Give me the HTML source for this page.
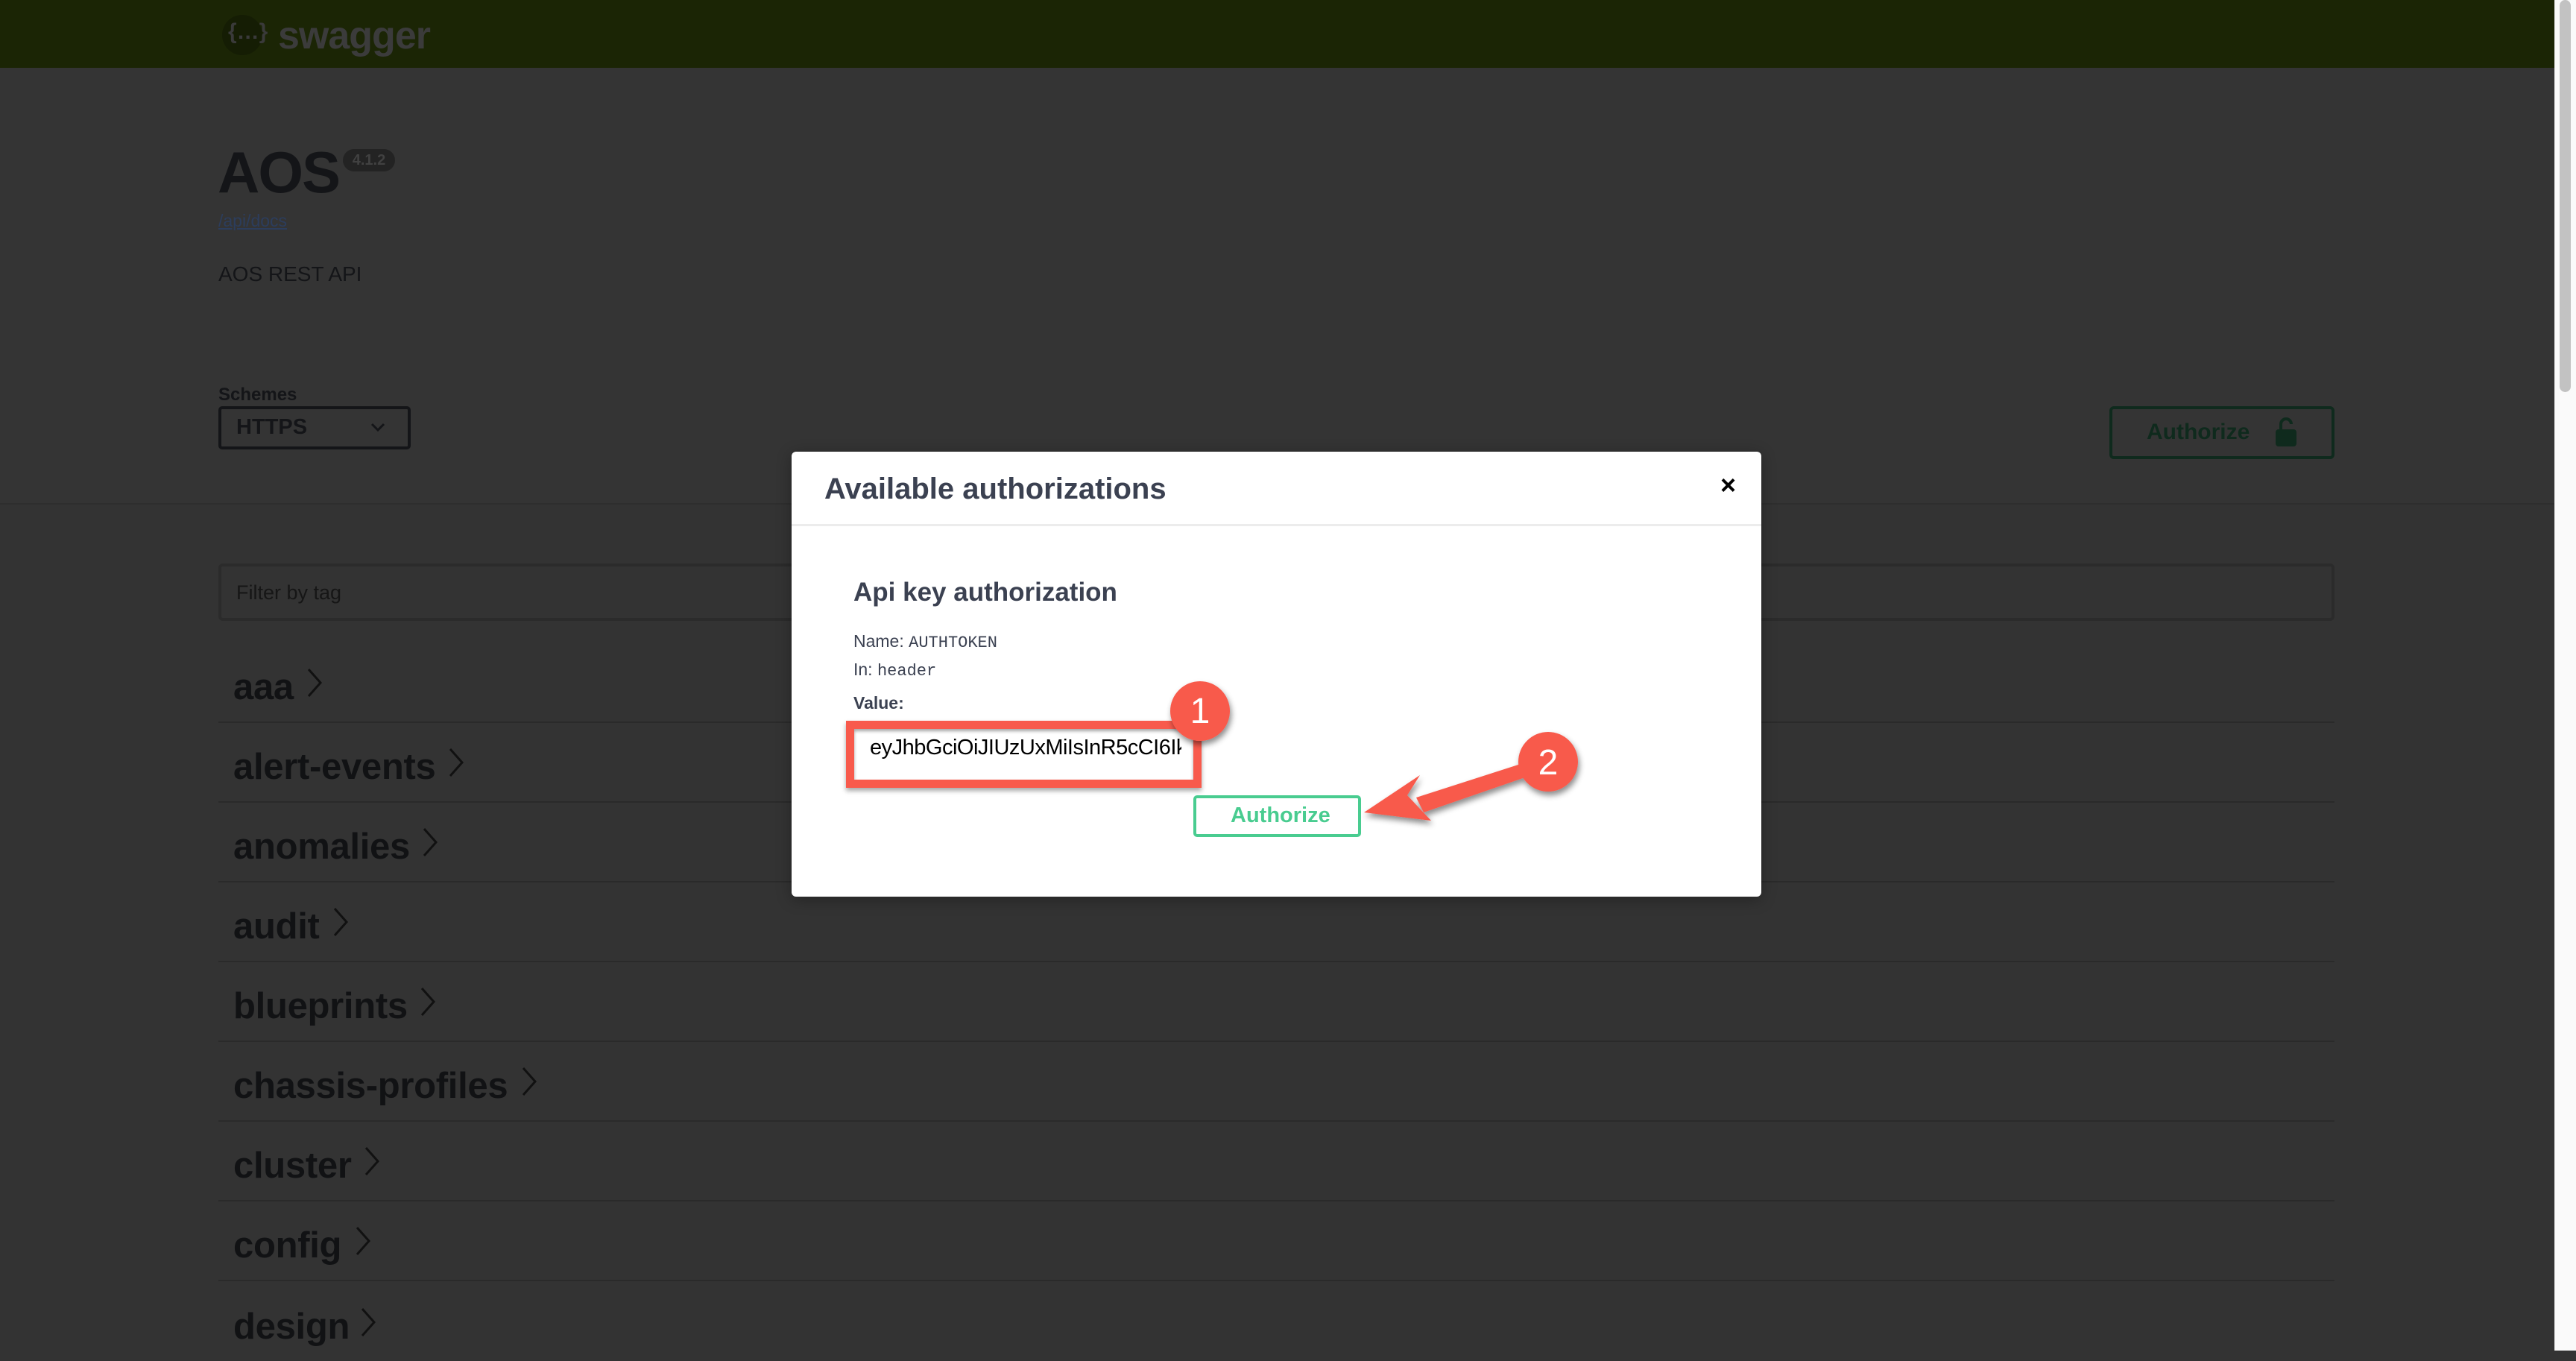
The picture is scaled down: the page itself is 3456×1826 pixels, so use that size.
<!DOCTYPE html>
<html><head><meta charset="utf-8">
<style>
*{margin:0;padding:0;box-sizing:border-box}
body{width:3456px;height:1812px;overflow:hidden;background:#333;font-family:"Liberation Sans",sans-serif;position:relative}
.abs{position:absolute}
.top{left:0;top:0;width:3427px;height:91px;background:#1b2505}
.hdr{left:0;top:91px;width:3427px;height:586px;background:#343434;border-bottom:2px solid #2e2e2e}
.sb{left:3427px;top:0;width:29px;height:1812px;background:#fafafa;border-left:1px solid #e6e6e6}
.thumb{left:3434px;top:0;width:15px;height:526px;background:#c2c2c2;border-radius:8px}
.tag{left:293px;width:2839px;height:107px;border-bottom:2px solid #2a2a2a}
.tag span{position:absolute;left:20px;bottom:18px;font-size:49px;font-weight:bold;color:#111214;letter-spacing:-0.3px}
.tag svg{position:absolute;bottom:32px}
.modal{left:1062px;top:606px;width:1301px;height:597px;background:#fff;border-radius:6px;box-shadow:0 4px 20px rgba(0,0,0,.3)}
</style></head><body>
<div class="abs top"></div>
<div class="abs" style="left:298px;top:20px;width:54px;height:54px;border-radius:50%;background:#151d04"></div>
<div class="abs" style="left:306px;top:26px;font-size:30px;font-weight:bold;color:#3a3a3a">{…}</div>
<div class="abs" style="left:373px;top:18px;font-size:52px;font-weight:bold;color:#3b3b3b;letter-spacing:-1px">swagger</div>
<div class="abs hdr"></div>
<div class="abs" style="left:292px;top:186px;font-size:78px;font-weight:bold;color:#141518;letter-spacing:-2px">AOS</div>
<div class="abs" style="left:460px;top:200px;width:70px;height:30px;border-radius:15px;background:#232323;color:#414141;font-size:20px;font-weight:bold;text-align:center;line-height:30px">4.1.2</div>
<div class="abs" style="left:293px;top:283px;font-size:23px;color:#2c3d5c;text-decoration:underline">/api/docs</div>
<div class="abs" style="left:293px;top:352px;font-size:28px;color:#141518">AOS REST API</div>
<div class="abs" style="left:293px;top:516px;font-size:24px;font-weight:bold;color:#141518">Schemes</div>
<div class="abs" style="left:293px;top:545px;width:258px;height:58px;border:4px solid #141518;border-radius:5px"></div>
<div class="abs" style="left:317px;top:557px;font-size:29px;font-weight:bold;color:#141518">HTTPS</div>
<svg class="abs" style="left:496px;top:566px" width="22" height="16"><path d="M3 3l8 8 8-8" stroke="#141518" stroke-width="3" fill="none"/></svg>
<div class="abs" style="left:2830px;top:545px;width:302px;height:71px;border:4px solid #0f2a1d;border-radius:6px"></div>
<div class="abs" style="left:2880px;top:563px;font-size:30px;font-weight:bold;color:#0f2a1d">Authorize</div>
<svg class="abs" style="left:3052px;top:560px" width="32" height="40"><path d="M8 16V9a7 7 0 0 1 14 0" stroke="#0f2a1d" stroke-width="4" fill="none"/><rect x="1" y="16" width="28" height="23" rx="4" fill="#0f2a1d"/></svg>
<div class="abs" style="left:293px;top:756px;width:2839px;height:77px;border:4px solid #2b2b2b;border-radius:6px"></div>
<div class="abs" style="left:317px;top:780px;font-size:27px;color:#161616">Filter by tag</div>
<div class="abs tag" style="top:863px"><span>aaa</span><svg style="left:118px" width="22" height="40"><path d="M3 2l16 18-16 18" stroke="#111" stroke-width="3" fill="none"/></svg></div>
<div class="abs tag" style="top:970px"><span>alert-events</span><svg style="left:308px" width="22" height="40"><path d="M3 2l16 18-16 18" stroke="#111" stroke-width="3" fill="none"/></svg></div>
<div class="abs tag" style="top:1077px"><span>anomalies</span><svg style="left:273px" width="22" height="40"><path d="M3 2l16 18-16 18" stroke="#111" stroke-width="3" fill="none"/></svg></div>
<div class="abs tag" style="top:1184px"><span>audit</span><svg style="left:153px" width="22" height="40"><path d="M3 2l16 18-16 18" stroke="#111" stroke-width="3" fill="none"/></svg></div>
<div class="abs tag" style="top:1291px"><span>blueprints</span><svg style="left:270px" width="22" height="40"><path d="M3 2l16 18-16 18" stroke="#111" stroke-width="3" fill="none"/></svg></div>
<div class="abs tag" style="top:1398px"><span>chassis-profiles</span><svg style="left:406px" width="22" height="40"><path d="M3 2l16 18-16 18" stroke="#111" stroke-width="3" fill="none"/></svg></div>
<div class="abs tag" style="top:1505px"><span>cluster</span><svg style="left:195px" width="22" height="40"><path d="M3 2l16 18-16 18" stroke="#111" stroke-width="3" fill="none"/></svg></div>
<div class="abs tag" style="top:1612px"><span>config</span><svg style="left:183px" width="22" height="40"><path d="M3 2l16 18-16 18" stroke="#111" stroke-width="3" fill="none"/></svg></div>
<div class="abs tag" style="top:1719px;border:none"><span>design</span><svg style="left:190px" width="22" height="40"><path d="M3 2l16 18-16 18" stroke="#111" stroke-width="3" fill="none"/></svg></div>
<div class="abs sb"></div><div class="abs thumb"></div>

<div class="abs modal"></div>
<div class="abs" style="left:1062px;top:703px;width:1301px;height:3px;background:#ececec"></div>
<div class="abs" style="left:1106px;top:634px;font-size:40px;font-weight:bold;color:#3b4151">Available authorizations</div>
<div class="abs" style="left:2308px;top:630px;font-size:36px;font-weight:bold;color:#000">×</div>
<div class="abs" style="left:1145px;top:775px;font-size:35px;font-weight:bold;color:#3b4151">Api key authorization</div>
<div class="abs" style="left:1145px;top:847px;font-size:23px;color:#3b4151">Name: <span style="font-family:'Liberation Mono',monospace;font-size:22px">AUTHTOKEN</span></div>
<div class="abs" style="left:1145px;top:885px;font-size:23px;color:#3b4151">In: <span style="font-family:'Liberation Mono',monospace;font-size:22px">header</span></div>
<div class="abs" style="left:1145px;top:930px;font-size:23px;font-weight:bold;color:#3b4151">Value:</div>
<div class="abs" style="left:1135px;top:967px;width:477px;height:90px;border:11px solid #f85a4c;background:#fff;box-shadow:0 4px 6px rgba(0,0,0,.35)"></div>
<div class="abs" style="left:1146px;top:978px;width:455px;height:68px;box-shadow:inset 0 3px 4px rgba(0,0,0,.35)"></div>
<div class="abs" style="left:1167px;top:987px;width:418px;overflow:hidden;white-space:nowrap;font-size:29px;color:#000;letter-spacing:-0.5px">eyJhbGciOiJIUzUxMiIsInR5cCI6IkpXVCJ9</div>
<div class="abs" style="left:1601px;top:1067px;width:225px;height:56px;border:4px solid #49cc90;border-radius:5px"></div>
<div class="abs" style="left:1651px;top:1078px;font-size:29px;font-weight:bold;color:#49cc90">Authorize</div>
<svg class="abs" style="left:0;top:0" width="3456" height="1812">
<defs><filter id="s" x="-20%" y="-20%" width="140%" height="160%"><feDropShadow dx="2" dy="5" stdDeviation="4" flood-opacity=".45"/></filter></defs>
<g filter="url(#s)" fill="#f85a4c">
<path d="M2040 1025 L1900 1070 L1910 1090 L2046 1043 Z"/>
<path d="M1830 1090 L1905 1040 L1888 1067 L1920 1101 Z"/>
<circle cx="1610" cy="954" r="40"/>
<circle cx="2077" cy="1022" r="40"/>
</g>
<text x="1610" y="970" font-family="Liberation Sans" font-size="48" fill="#fff" text-anchor="middle">1</text>
<text x="2077" y="1039" font-family="Liberation Sans" font-size="48" fill="#fff" text-anchor="middle">2</text>
</svg>
</body></html>
